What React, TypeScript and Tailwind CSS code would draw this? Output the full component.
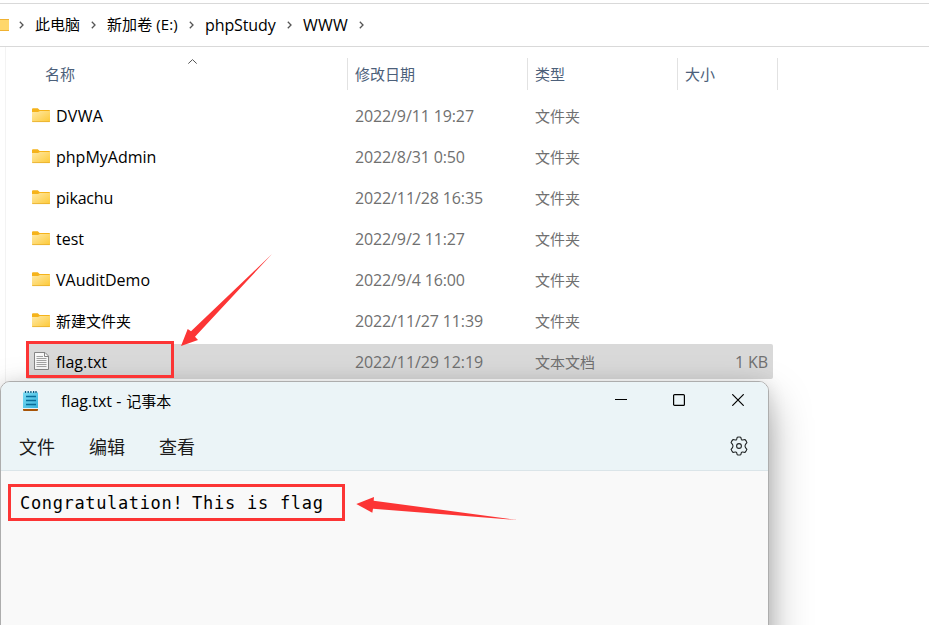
import React from "react";

type Entry = { name: string; date: string; type: string; style: string };

const folders: Entry[] = [
  { name: "DVWA", date: "2022/9/11 19:27", type: "文件夹", style: "pt-[1px] text-[16px] tracking-[0.25px]" },
  { name: "phpMyAdmin", date: "2022/8/31 0:50", type: "文件夹", style: "pt-[1px] text-[16px]" },
  { name: "pikachu", date: "2022/11/28 16:35", type: "文件夹", style: "pt-[1px] text-[16px] tracking-[-0.2px]" },
  { name: "test", date: "2022/9/2 11:27", type: "文件夹", style: "pt-[1px] text-[16px]" },
  { name: "VAuditDemo", date: "2022/9/4 16:00", type: "文件夹", style: "pt-[1px] text-[16px]" },
  { name: "新建文件夹", date: "2022/11/27 11:39", type: "文件夹", style: "text-[15px]" },
];

function FolderIcon() {
  return (
    <svg className="block h-[15px] w-[18px]" viewBox="0 0 18 15">
      <defs>
        <linearGradient id="folder" x1="0" y1="0" x2="1" y2="1">
          <stop offset="0" stopColor="#ffe9a6" />
          <stop offset="1" stopColor="#fdc937" />
        </linearGradient>
      </defs>
      <path d="M0 1.2Q0 .2 1 .2H5.8L7.6 2H17.2Q18 2 18 2.8V7H0Z" fill="#f5b31b" />
      <path d="M0 4H6L8 3H18V13.4Q18 14 17.4 14H.6Q0 14 0 13.4Z" fill="url(#folder)" />
      <path d="M.3 13.6H17.7" stroke="#e6ac2b" strokeWidth=".8" />
    </svg>
  );
}

function TextFileIcon() {
  return (
    <svg className="block h-[18px] w-[15px]" viewBox="0 0 15 18" fill="none">
      <path d="M.5.5H11L14.5 4V17.5H.5Z" fill="#f8f8f8" stroke="#858585" />
      <path d="M10.5 1V4.5H14" stroke="#858585" />
      <path d="M2.5 4.5H9M2.5 6.5H12.5M2.5 8.5H12.5M2.5 10.5H12.5M2.5 12.5H12.5M2.5 14.5H12.5" stroke="#a2a2a2" />
    </svg>
  );
}

function NotepadIcon() {
  return (
    <svg className="block h-[20px] w-[15px]" viewBox="0 0 15 20">
      <defs>
        <linearGradient id="pad" x1="0" y1="0" x2="1" y2="1">
          <stop offset="0" stopColor="#7bdcf3" />
          <stop offset="1" stopColor="#36b2dc" />
        </linearGradient>
      </defs>
      <path d="M0 17H15V19Q15 20 14 20H1Q0 20 0 19Z" fill="#a75407" />
      <path d="M0 16.5H15V18H0Z" fill="#e9f3f6" />
      <path d="M0 1.5H15V17H0Z" fill="url(#pad)" />
      <path d="M2.5 0V2M5.2 0V2M7.9 0V2M10.6 0V2M13 0V2" stroke="#075a80" strokeWidth="1.3" />
      <path d="M3 5.5H13M3 9.5H13M3 13.5H13" stroke="#086c98" strokeWidth="1.4" />
    </svg>
  );
}

function Chevron({ className }: { className: string }) {
  return (
    <svg className={`h-[8px] w-[5px] shrink-0 ${className}`} viewBox="0 0 5 8" fill="none">
      <path d="M.8.8L4 4L.8 7.2" stroke="#555" strokeWidth="1.3" />
    </svg>
  );
}

function GearIcon() {
  return (
    <svg className="block h-[20px] w-[20px]" viewBox="0 0 20 20" fill="none" stroke="#202425" strokeWidth="1.1" strokeLinejoin="round">
      <path d="M8.2 1.3Q10 .8 11.8 1.3L12.3 3.2Q12.7 4.2 13.8 4L15.9 3.5Q17.3 4.8 17.9 6.6L16.5 8.3Q15.5 10 16.5 11.7L17.9 13.4Q17.3 15.2 15.9 16.5L13.8 16Q12.7 15.8 12.3 16.8L11.8 18.7Q10 19.2 8.2 18.7L7.7 16.8Q7.3 15.8 6.2 16L4.1 16.5Q2.7 15.2 2.1 13.4L3.5 11.7Q4.5 10 3.5 8.3L2.1 6.6Q2.7 4.8 4.1 3.5L6.2 4Q7.3 4.2 7.7 3.2Z" />
      <circle cx="10" cy="10" r="2.4" />
    </svg>
  );
}

export default function App() {
  return (
    <div className="relative h-[625px] w-[929px] overflow-hidden bg-white font-['Open_Sans','Noto_Sans_CJK_SC',sans-serif] text-[15px] leading-[20px] text-black">
      <nav className="mt-[3px] flex h-[44px] items-center border-y border-[#d9d9d9] pb-[1px] whitespace-nowrap">
        <div className="h-[12px] w-[9px] shrink-0 border-y border-[#f0b232] bg-[#ffd76b]" />
        <Chevron className="ml-[10px]" />
        <span className="ml-[11px] w-[46px] pb-[1px]">此电脑</span>
        <Chevron className="ml-[10px]" />
        <span className="ml-[11px] w-[72px] pb-[1px] tracking-[0.1px]">新加卷 (E:)</span>
        <Chevron className="ml-[10px]" />
        <span className="ml-[11px] w-[71px] text-[16px] tracking-[-0.1px]">phpStudy</span>
        <Chevron className="ml-[11px]" />
        <span className="ml-[11px] w-[45px] text-[16px] tracking-[0.25px]">WWW</span>
        <Chevron className="ml-[11px]" />
      </nav>

      <main className="ml-[5px] h-[578px] border-l border-[#f3f3f3] pt-[11px]">
        <div className="flex h-[32px] text-[#4c607a]">
          <div className="flex w-[342px] items-center border-r border-[#e2e2e2] pb-[1px] pl-[39px]">
            <span className="w-[30px] whitespace-nowrap">名称</span>
            <svg className="mb-[24px] ml-[113px] h-[5px] w-[9px]" viewBox="0 0 9 5" fill="none">
              <path d="M.3 4.6L4.5.6L8.7 4.6" stroke="#555" />
            </svg>
          </div>
          <div className="flex w-[180px] items-center border-r border-[#e2e2e2] pb-[1px] pl-[7px]">修改日期</div>
          <div className="flex w-[150px] items-center border-r border-[#e2e2e2] pb-[1px] pl-[7px]">类型</div>
          <div className="flex w-[100px] items-center border-r border-[#e2e2e2] pb-[1px] pl-[7px]">大小</div>
        </div>
        <div className="mt-[8px] ml-[20px] flex w-[747px] flex-col gap-[6px]">
          {folders.map((f) => (
            <div key={f.name} className="flex h-[35px] items-center pl-[6px]">
              <FolderIcon />
              <span className={`ml-[6px] w-[299px] ${f.style}`}>{f.name}</span>
              <span className="w-[180px] pt-[1px] text-[16px] tracking-[-0.12px] text-[#707070]">{f.date}</span>
              <span className="text-[#707070]">{f.type}</span>
            </div>
          ))}
          <div className="flex h-[35px] items-center rounded-[2px] bg-[#d9d9d9] pr-[5px] pl-[8px]">
            <div className="pb-[1px]"><TextFileIcon /></div>
            <span className="ml-[7px] w-[299px] pt-[1px] text-[16px]">flag.txt</span>
            <span className="w-[180px] pt-[1px] text-[16px] tracking-[-0.12px] text-[#707070]">2022/11/29 12:19</span>
            <span className="text-[#707070]">文本文档</span>
            <span className="ml-auto pt-[1px] text-[16px] tracking-[-0.1px] text-[#707070]">1 KB</span>
          </div>
        </div>
      </main>

      <section className="absolute top-[381px] left-0 h-[290px] w-[769px] overflow-hidden rounded-t-[10px] border border-[#adadad] bg-[#f9f9f9] shadow-[0_20px_42px_rgba(0,0,0,0.34),0_2px_18px_rgba(0,0,0,0.12)]">
        <header className="h-[89px] border-b border-[#dbe5e9] bg-[#ebf4f7]">
          <div className="flex h-[38px] items-center pl-[22px]">
            <NotepadIcon />
            <span className="ml-[23px] flex w-[120px] gap-[5px] whitespace-nowrap">
              <span className="text-[16px]">flag.txt -</span>
              <span>记事本</span>
            </span>
            <div className="mr-[24px] ml-auto flex items-center gap-[46px] pb-[2px]">
              <svg className="h-[12px] w-[12px]" viewBox="0 0 12 12"><path d="M0 5.5H12" stroke="#000" /></svg>
              <svg className="mr-[1px] h-[12px] w-[12px]" viewBox="0 0 12 12" fill="none"><rect x=".6" y=".6" width="10.8" height="10.8" rx="1" stroke="#000" strokeWidth="1.2" /></svg>
              <svg className="h-[12px] w-[12px]" viewBox="0 0 12 12"><path d="M.3.3L11.7 11.7M11.7.3L.3 11.7" stroke="#000" strokeWidth="1.2" /></svg>
            </div>
          </div>
          <div className="flex h-[52px] items-center pt-[2px] pr-[19px] pl-[18px] text-[18px] text-[#1b1b1b]">
            <span className="w-[70px]">文件</span>
            <span className="w-[70px]">编辑</span>
            <span>查看</span>
            <div className="ml-auto pb-[2px]"><GearIcon /></div>
          </div>
        </header>
        <div className="mt-[13px] ml-[7px] flex h-[37px] w-[337px] items-center border-[3px] border-[#fc3535] pl-[9px] font-['DejaVu_Sans_Mono',monospace] text-[17px] whitespace-nowrap">
          <span className="w-[172px] tracking-[0.65px]">Congratulation!</span>
          <span className="tracking-[0.75px]">This is flag</span>
        </div>
      </section>

      <div className="absolute top-[341px] left-[26px] h-[37px] w-[148px] border-[3px] border-[#fc3535]" />
      <svg className="absolute top-0 left-0 h-[625px] w-[929px]" viewBox="0 0 929 625" fill="#fc3535">
        <path d="M181 346L187.7 329L191 331.3L272 254L195 336.7L198 340Z" />
        <path d="M356.3 504L374 497L373.7 500.7L518 520L373 508.7L372.3 512.7Z" />
      </svg>
    </div>
  );
}
